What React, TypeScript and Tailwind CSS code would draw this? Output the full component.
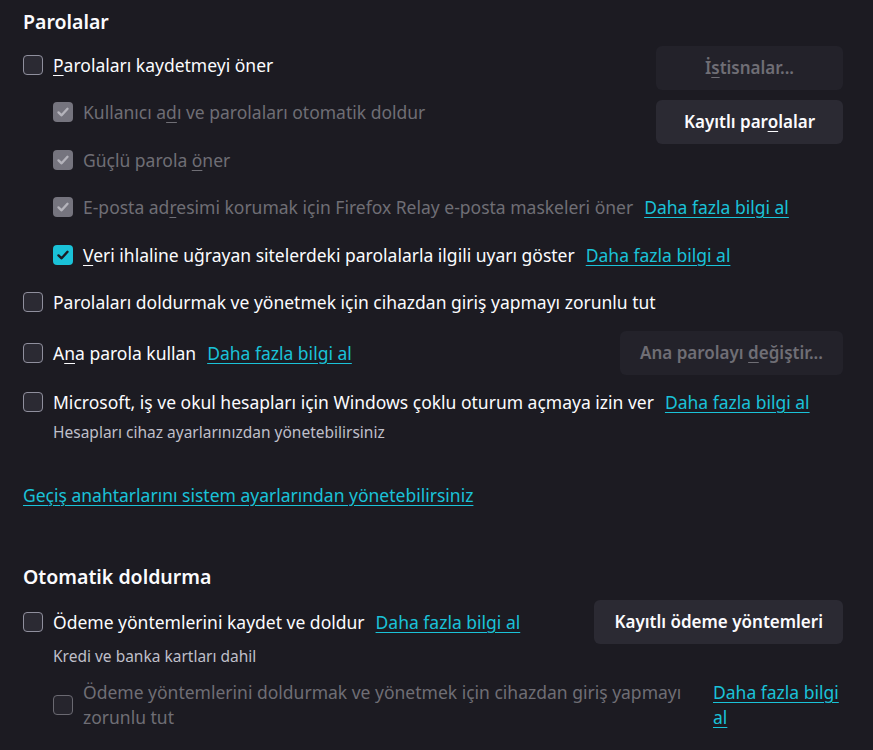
import React from "react";

const FONT = { fontFamily: '"Noto Sans", "Open Sans", sans-serif' };

type BoxState = "off" | "on" | "disabledOn" | "disabledOff";

const Check = ({ color }: { color: string }) => (
  <svg width="14" height="14" viewBox="0 0 14 14" fill="none">
    <path d="M2.5 7.4 L5.6 10.3 L11.5 3.8" stroke={color} strokeWidth="2.4" strokeLinecap="round" strokeLinejoin="round" />
  </svg>
);

const Box = ({ state = "off" }: { state?: BoxState }) => {
  if (state === "on")
    return (
      <span className="w-[20px] h-[20px] shrink-0 rounded-[4px] bg-[#1ac2d8] flex items-center justify-center">
        <Check color="#1c1b22" />
      </span>
    );
  if (state === "disabledOn")
    return (
      <span className="w-[20px] h-[20px] shrink-0 rounded-[4px] bg-[#75747e] flex items-center justify-center">
        <Check color="#b4b3bb" />
      </span>
    );
  if (state === "disabledOff")
    return <span className="w-[20px] h-[20px] shrink-0 rounded-[4px] border border-[#6a6971] bg-[#26252d]" />;
  return <span className="w-[20px] h-[20px] shrink-0 rounded-[4px] border border-[#8f8f9d] bg-[#2b2a33]" />;
};

const More = ({ children = "Daha fazla bilgi al" }: { children?: React.ReactNode }) => (
  <a className="text-[#1ac2d8] underline underline-offset-[3px] decoration-1 cursor-pointer">{children}</a>
);

const Row = ({
  state,
  indent,
  disabled,
  children,
  link,
}: {
  state?: BoxState;
  indent?: boolean;
  disabled?: boolean;
  children: React.ReactNode;
  link?: boolean;
}) => (
  <div className={`h-[47.5px] flex items-center gap-[10px] whitespace-nowrap ${indent ? "pl-[30px]" : ""}`}>
    <Box state={state} />
    <span className={disabled ? "text-[#6f6e75]" : "text-[#fbfbfe]"}>{children}</span>
    {link && (
      <span className="ml-[1px]">
        <More />
      </span>
    )}
  </div>
);

const Btn = ({ children, disabled }: { children: React.ReactNode; disabled?: boolean }) => (
  <button
    className={`h-[44px] rounded-[6px] px-[20px] font-semibold text-[17px] whitespace-nowrap ${
      disabled ? "bg-[#23222a] text-[#6f6e75]" : "bg-[#2b2a33] text-[#fbfbfe]"
    }`}
  >
    {children}
  </button>
);

export default function App() {
  return (
    <div style={FONT} className="w-[873px] h-[750px] overflow-hidden bg-[#1c1b22] text-[#fbfbfe] text-[17.5px] pl-[23px] pr-[30px]">
      <h2 className="pt-[8px] h-[41px] text-[19.5px] leading-[28px] font-semibold">Parolalar</h2>

      <div className="flex justify-between">
        <div>
          <Row>
            <span className="underline underline-offset-[3px]">P</span>arolaları kaydetmeyi öner
          </Row>
          <Row indent disabled state="disabledOn">
            Kullanıcı a<span className="underline underline-offset-[3px]">d</span>ı ve parolaları otomatik doldur
          </Row>
          <Row indent disabled state="disabledOn">
            Güçlü parola <span className="underline underline-offset-[3px]">ö</span>ner
          </Row>
          <Row indent disabled state="disabledOn" link>
            E-posta ad<span className="underline underline-offset-[3px]">r</span>esimi korumak için Firefox Relay e-posta maskeleri öner
          </Row>
          <Row indent state="on" link>
            <span className="underline underline-offset-[3px]">V</span>eri ihlaline uğrayan sitelerdeki parolalarla ilgili uyarı göster
          </Row>
          <Row>Parolaları doldurmak ve yönetmek için cihazdan giriş yapmayı zorunlu tut</Row>
        </div>
        <div className="flex flex-col gap-[10px] pt-[5px] w-[187px] shrink-0 -ml-[187px]">
          <Btn disabled>
            İ<span className="underline underline-offset-[3px]">s</span>tisnalar...
          </Btn>
          <Btn>
            Kayıtlı par<span className="underline underline-offset-[3px]">o</span>lalar
          </Btn>
        </div>
      </div>

      <div className="mt-[5px] h-[44px] flex items-center justify-between">
        <div className="flex items-center gap-[10px]">
          <Box />
          <span>
            A<span className="underline underline-offset-[3px]">n</span>a parola kullan
          </span>
          <span className="ml-[1px]">
            <More />
          </span>
        </div>
        <Btn disabled>
          Ana parolayı <span className="underline underline-offset-[3px]">d</span>eğiştir...
        </Btn>
      </div>

      <div className="mt-[15px] flex items-center gap-[10px] h-[24px] whitespace-nowrap">
        <Box />
        <span>Microsoft, iş ve okul hesapları için Windows çoklu oturum açmaya izin ver</span>
        <span className="ml-[1px]">
          <More />
        </span>
      </div>
      <p className="mt-[8px] pl-[30px] text-[15.5px] leading-[20px] text-[#bfbfc9]">
        Hesapları cihaz ayarlarınızdan yönetebilirsiniz
      </p>

      <div className="mt-[41px] leading-[24px]">
        <More>Geçiş anahtarlarını sistem ayarlarından yönetebilirsiniz</More>
      </div>

      <h2 className="mt-[56px] text-[19.5px] leading-[28px] font-semibold">Otomatik doldurma</h2>

      <div className="mt-[9px] flex justify-between">
        <div>
          <div className="h-[44px] flex items-center gap-[10px] whitespace-nowrap">
            <Box />
            <span>Ödeme yöntemlerini kaydet ve doldur</span>
            <span className="ml-[1px]">
              <More />
            </span>
          </div>
          <p className="mt-[2px] pl-[30px] text-[15.5px] leading-[20px] text-[#bfbfc9]">Kredi ve banka kartları dahil</p>
        </div>
        <div>
          <Btn>Kayıtlı ödeme yöntemleri</Btn>
        </div>
      </div>

      <div className="mt-[14px] pl-[30px] flex items-center">
        <Box state="disabledOff" />
        <span className="ml-[10px] w-[611px] leading-[25px] text-[#6f6e75] whitespace-nowrap">
          Ödeme yöntemlerini doldurmak ve yönetmek için cihazdan giriş yapmayı
          <br />
          zorunlu tut
        </span>
        <span className="ml-[19px] leading-[25px] whitespace-nowrap">
          <More>
            Daha fazla bilgi
            <br />
            al
          </More>
        </span>
      </div>
    </div>
  );
}
